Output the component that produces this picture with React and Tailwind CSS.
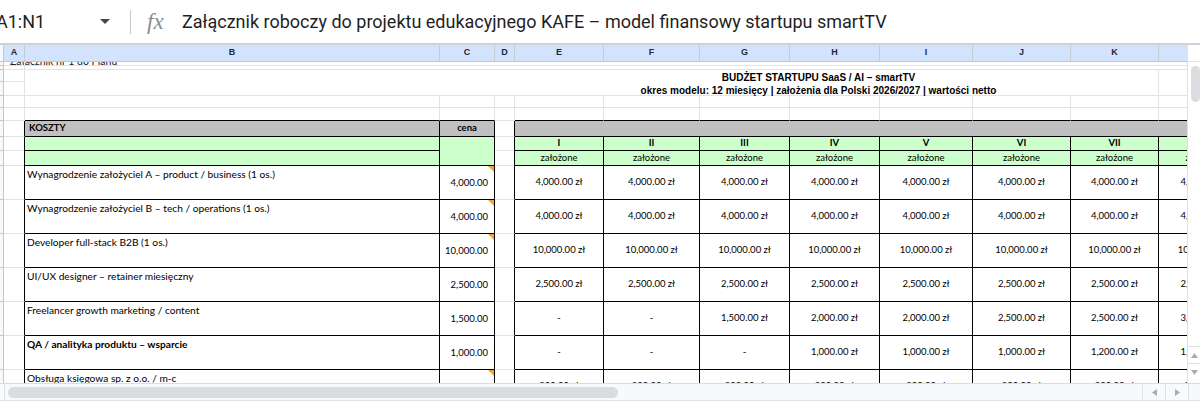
import React from 'react'

// Kolumny arkusza: litera nagłówka i szerokość
const columns = [
  { w: 'w-[21px]', l: 'A' },
  { w: 'w-[415px]', l: 'B' },
  { w: 'w-[55px]', l: 'C' },
  { w: 'w-[20px]', l: 'D' },
  { w: 'w-[89px]', l: 'E' },
  { w: 'w-[96px]', l: 'F' },
  { w: 'w-[90px]', l: 'G' },
  { w: 'w-[90px]', l: 'H' },
  { w: 'w-[93px]', l: 'I' },
  { w: 'w-[98px]', l: 'J' },
  { w: 'w-[88px]', l: 'K' },
  { w: 'w-[91px]', l: 'L' },
]

// Miesiące (kolumny E..L)
const months = [
  { w: 'w-[89px]', n: 'I' },
  { w: 'w-[96px]', n: 'II' },
  { w: 'w-[90px]', n: 'III' },
  { w: 'w-[90px]', n: 'IV' },
  { w: 'w-[93px]', n: 'V' },
  { w: 'w-[98px]', n: 'VI' },
  { w: 'w-[88px]', n: 'VII' },
  { w: 'w-[91px]', n: 'VIII' },
]

const same = (v) => Array(8).fill(v)

const koszty = [
  { label: 'Wynagrodzenie założyciel A – product / business (1 os.)', cena: '4,000.00', note: true, vals: same('4,000.00 zł') },
  { label: 'Wynagrodzenie założyciel B – tech / operations (1 os.)', cena: '4,000.00', note: true, vals: same('4,000.00 zł') },
  { label: 'Developer full-stack B2B (1 os.)', cena: '10,000.00', note: true, vals: same('10,000.00 zł') },
  { label: 'UI/UX designer – retainer miesięczny', cena: '2,500.00', vals: same('2,500.00 zł') },
  {
    label: 'Freelancer growth marketing / content',
    cena: '1,500.00',
    vals: ['-', '-', '1,500.00 zł', '2,000.00 zł', '2,000.00 zł', '2,500.00 zł', '2,500.00 zł', '3,000.00 zł'],
  },
  {
    label: 'QA / analityka produktu – wsparcie',
    bold: true,
    cena: '1,000.00',
    vals: ['-', '-', '-', '1,000.00 zł', '1,000.00 zł', '1,000.00 zł', '1,200.00 zł', '1,200.00 zł'],
  },
  { label: 'Obsługa księgowa sp. z o.o. / m-c', cena: '800.00', note: true, vals: same('800.00 zł') },
]

const RowHead = ({ className = '' }) => (
  <div className={`w-[4px] shrink-0 bg-[#f8f9fa] border-r border-b border-[#c7c7c7] ${className}`} />
)

// Zwykły wiersz siatki (bez treści)
const EmptyRow = ({ h, bottomBlack }) => (
  <div className={`flex ${h}`}>
    <RowHead />
    {columns.map((c) => {
      const black = bottomBlack && c.l !== 'A' && c.l !== 'D'
      return (
        <div
          key={c.l}
          className={`${c.w} shrink-0 border-r border-r-[#e2e3e3] border-b ${black ? 'border-b-black' : 'border-b-[#e2e3e3]'}`}
        />
      )
    })}
  </div>
)

const Triangle = () => (
  <div className="absolute top-0 right-0 w-0 h-0 border-l-[6px] border-l-transparent border-t-[6px] border-t-[#f4a62a]" />
)

const Arrow = ({ dir }) => {
  const pts = {
    up: '0,5 3.5,0 7,5',
    down: '0,0 3.5,5 7,0',
    left: '5,0 0,3.5 5,7',
    right: '0,0 5,3.5 0,7',
  }[dir]
  const vertical = dir === 'up' || dir === 'down'
  return (
    <svg width={vertical ? 7 : 5} height={vertical ? 5 : 7}>
      <polygon points={pts} fill="#a8abaf" />
    </svg>
  )
}

export default function App() {
  return (
    <div className="w-[1200px] h-[405px] overflow-hidden bg-white text-black font-['Lato',sans-serif]">
      {/* Pasek formuły */}
      <div className="h-[45px] flex items-center border-b-2 border-[#cfd1d4] font-['Roboto',sans-serif] text-[#1f1f1f]">
        <div className="w-[130px] shrink-0 flex items-center">
          <span className="ml-[-4px] text-[18px]">A1:N1</span>
          <svg className="ml-auto mr-[20px]" width="10" height="5">
            <polygon points="0,0 10,0 5,5" fill="#444746" />
          </svg>
        </div>
        <div className="w-px h-[24px] bg-[#c7c7c7]" />
        <span className="ml-[16px] w-[22px] font-['Liberation_Serif',serif] italic text-[23px] text-[#8a8d91] leading-none">fx</span>
        <span className="ml-[13px] text-[18px] whitespace-nowrap">
          Załącznik roboczy do projektu edukacyjnego KAFE – model finansowy startupu smartTV
        </span>
      </div>

      <div className="flex h-[338px]">
        {/* Obszar siatki */}
        <div className="w-[1187px] overflow-hidden">
          <div className="w-max">
            {/* Nagłówki kolumn */}
            <div className="flex h-[17px] bg-[#d3e3fd] border-b border-[#c4c7c5]">
              <div className="w-[4px] shrink-0 bg-[#f8f9fa] border-r border-[#c7c7c7]" />
              {columns.map((c) => (
                <div
                  key={c.l}
                  className={`${c.w} shrink-0 border-r border-[#c4cbd6] flex items-center justify-center font-['Liberation_Sans',sans-serif] font-bold text-[9px] text-[#1b2a3f]`}
                >
                  {c.l}
                </div>
              ))}
            </div>

            {/* Wiersz 1 – przycięty */}
            <div className="flex h-[4px]">
              <RowHead />
              <div className="flex-1 overflow-hidden border-b border-[#e2e3e3]">
                <div className="mt-[-6px] pl-[6px] text-[10.5px] leading-[10px] whitespace-nowrap text-[#222]">
                  Załącznik nr 1 do Planu
                </div>
              </div>
            </div>
            <div className="flex h-[4px]">
              <RowHead />
              <div className="w-[21px] shrink-0 border-r border-b border-[#e2e3e3]" />
              <div className="flex-1 border-b border-[#e2e3e3]" />
            </div>

            {/* Wiersz 2 – tytuł */}
            <div className="flex h-[26px]">
              <div className="w-[4px] shrink-0 flex flex-col">
                <div className="h-[12px] bg-[#f8f9fa] border-r border-b border-[#c7c7c7]" />
                <div className="flex-1 bg-[#f8f9fa] border-r border-b border-[#c7c7c7]" />
              </div>
              <div className="w-[21px] shrink-0 flex flex-col border-r border-[#e2e3e3]">
                <div className="h-[12px] border-b border-[#e2e3e3]" />
                <div className="flex-1 border-b border-[#e2e3e3]" />
              </div>
              <div className="w-[1134px] shrink-0 border-r border-b border-[#e2e3e3] pl-[454px] pt-[1px] text-center font-['Liberation_Sans',sans-serif] font-bold text-[10px] leading-[13px] text-black">
                <div>BUDŻET STARTUPU SaaS / AI – smartTV</div>
                <div className="whitespace-nowrap">
                  okres modelu: 12 miesięcy | założenia dla Polski 2026/2027 | wartości netto
                </div>
              </div>
              <div className="w-[91px] shrink-0 border-r border-b border-[#e2e3e3]" />
            </div>

            <EmptyRow h="h-[12px]" />
            <EmptyRow h="h-[13px]" bottomBlack />

            {/* Wiersz 5 – KOSZTY / cena */}
            <div className="flex h-[16px]">
              <RowHead />
              <div className="w-[21px] shrink-0 border-r border-r-black border-b border-b-[#e2e3e3]" />
              <div className="w-[415px] shrink-0 bg-[#c0c0c0] border-r border-b border-black pl-[4px] flex items-center font-bold text-[9.5px]">
                KOSZTY
              </div>
              <div className="w-[55px] shrink-0 bg-[#c0c0c0] border-r border-b border-black flex items-center justify-center font-bold text-[9.5px]">
                cena
              </div>
              <div className="w-[20px] shrink-0 border-r border-r-black border-b border-b-[#e2e3e3]" />
              <div className="w-[735px] shrink-0 bg-[#c0c0c0] border-b border-black" />
            </div>

            {/* Wiersze 6-7 – nagłówki miesięcy */}
            <div className="flex h-[29px]">
              <div className="w-[4px] shrink-0 flex flex-col">
                <div className="h-[14px] bg-[#f8f9fa] border-r border-b border-[#c7c7c7]" />
                <div className="flex-1 bg-[#f8f9fa] border-r border-b border-[#c7c7c7]" />
              </div>
              <div className="w-[21px] shrink-0 flex flex-col border-r border-black">
                <div className="h-[14px] border-b border-[#e2e3e3]" />
                <div className="flex-1 border-b border-[#e2e3e3]" />
              </div>
              <div className="w-[415px] shrink-0 flex flex-col border-r border-black bg-[#ccffcc]">
                <div className="h-[14px] border-b border-black" />
                <div className="flex-1 border-b border-black" />
              </div>
              <div className="w-[55px] shrink-0 bg-[#ccffcc] border-r border-b border-black" />
              <div className="w-[20px] shrink-0 flex flex-col border-r border-black">
                <div className="h-[14px] border-b border-[#e2e3e3]" />
                <div className="flex-1 border-b border-[#e2e3e3]" />
              </div>
              {months.map((m) => (
                <div key={m.n} className={`${m.w} shrink-0 flex flex-col border-r border-black bg-[#ccffcc]`}>
                  <div className="h-[14px] border-b border-black flex items-center justify-center font-bold text-[9.5px]">
                    {m.n}
                  </div>
                  <div className="flex-1 border-b border-black flex items-center justify-center text-[9.5px]">
                    założone
                  </div>
                </div>
              ))}
            </div>

            {/* Wiersze kosztów */}
            {koszty.map((r) => (
              <div key={r.label} className="flex h-[34px]">
                <RowHead />
                <div className="w-[21px] shrink-0 border-r border-r-black border-b border-b-[#e2e3e3]" />
                <div
                  className={`w-[415px] shrink-0 border-r border-b border-black pl-[2px] pt-[2px] text-[10.2px] leading-[12px] ${r.bold ? 'font-bold' : ''}`}
                >
                  {r.label}
                </div>
                <div className="relative w-[55px] shrink-0 border-r border-b border-black flex items-center justify-end pr-[6px] pt-[1px] text-[9.5px]">
                  {r.cena}
                  {r.note && <Triangle />}
                </div>
                <div className="w-[20px] shrink-0 border-r border-r-black border-b border-b-[#e2e3e3]" />
                {months.map((m, i) => (
                  <div
                    key={m.n}
                    className={`${m.w} shrink-0 border-r border-b border-black flex items-center justify-center text-[9.5px] whitespace-nowrap`}
                  >
                    {r.vals[i]}
                  </div>
                ))}
              </div>
            ))}
          </div>
        </div>

        {/* Pionowy pasek przewijania */}
        <div className="w-[13px] shrink-0 flex flex-col border-l border-[#e0e0e0] bg-white">
          <div className="h-[17px] border-b border-[#e6e6e6]" />
          <div className="mt-[4px] ml-[3px] w-[9px] h-[36px] rounded-full bg-[#dadce0]" />
          <div className="flex-1" />
          <div className="h-[17px] border-t border-[#e0e0e0] flex items-center justify-center">
            <Arrow dir="up" />
          </div>
          <div className="h-[17px] mb-[3px] border-t border-[#e0e0e0] flex items-center justify-center">
            <Arrow dir="down" />
          </div>
        </div>
      </div>

      {/* Poziomy pasek przewijania */}
      <div className="flex h-[17px] bg-[#f8f9fa] border-t border-[#dadce0]">
        <div className="w-[5px] shrink-0 border-r border-[#e0e0e0]" />
        <div className="w-[1137px] shrink-0 flex items-center">
          <div className="ml-[3px] w-[610px] h-[11px] rounded-full bg-[#dadce0]" />
        </div>
        <div className="w-[23px] shrink-0 border-l border-[#e0e0e0] flex items-center justify-center">
          <Arrow dir="left" />
        </div>
        <div className="w-[23px] shrink-0 border-l border-[#e0e0e0] flex items-center justify-center">
          <Arrow dir="right" />
        </div>
        <div className="w-[12px] shrink-0 border-l border-[#e0e0e0]" />
      </div>
      <div className="h-[5px] border-t border-[#e0e0e0] bg-white" />
    </div>
  )
}
